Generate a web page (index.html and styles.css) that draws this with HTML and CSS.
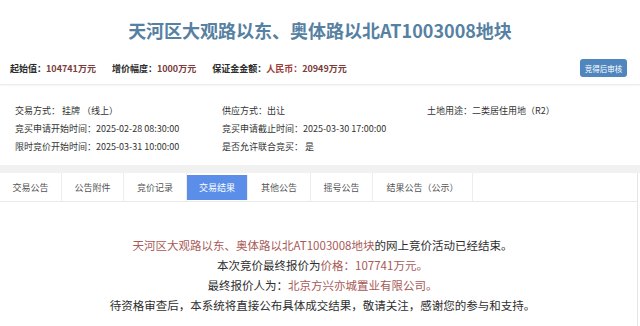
FILE: index.html
```html
<!DOCTYPE html>
<html lang="zh-CN">
<head>
    <meta charset="UTF-8">
    <meta name="viewport" content="width=device-width, initial-scale=1.0">
    <title>交易结果</title>
    <link rel="stylesheet" href="styles.css">
</head>
<body>
    <h1 class="title">天河区大观路以东、奥体路以北AT1003008地块</h1>

    <div class="summary">
        <span class="item"><b>起始值：</b><em>104741万元</em></span>
        <span class="item"><b>增价幅度：</b><em>1000万元</em></span>
        <span class="item"><b>保证金金额：</b><em class="rmb">人民币：</em><em>20949万元</em></span>
        <button class="audit">竞得后审核</button>
    </div>

    <!-- 基本信息 -->
    <div class="info">
        <div>交易方式：&nbsp;挂牌 （线上）</div>
        <div>供应方式：出让</div>
        <div>土地用途：二类居住用地（R2）</div>
        <div>竞买申请开始时间：2025-02-28 08:30:00</div>
        <div>竞买申请截止时间：2025-03-30 17:00:00</div>
        <div></div>
        <div>限时竞价开始时间：2025-03-31 10:00:00</div>
        <div>是否允许联合竞买：&nbsp;是</div>
        <div></div>
    </div>

    <div class="band"></div>

    <div class="panel">
        <div class="tabs">
            <div class="tab">交易公告</div>
            <div class="tab">公告附件</div>
            <div class="tab w63">竞价记录</div>
            <div class="tab active">交易结果</div>
            <div class="tab w63">其他公告</div>
            <div class="tab">摇号公告</div>
            <div class="tab wide">结果公告（公示）</div>
        </div>

        <!-- 交易结果 -->
        <div class="result">
            <p><span class="hl">天河区大观路以东、奥体路以北AT1003008地块</span>的网上竞价活动已经结束。</p>
            <p>本次竞价最终报价为<span class="hl">价格：107741万元。</span></p>
            <p>最终报价人为：<span class="hl">北京方兴亦城置业有限公司。</span></p>
            <p>待资格审查后，本系统将直接公布具体成交结果，敬请关注，感谢您的参与和支持。</p>
        </div>
    </div>

    <div class="band bottom"></div>
</body>
</html>
```

FILE: styles.css
```css
* {
    margin: 0;
    padding: 0;
    box-sizing: border-box;
}

body {
    background: #fff;
    font-family: "Noto Sans CJK SC", "Microsoft YaHei", sans-serif;
    color: #333;
    overflow: hidden;
}

.title {
    padding: 19px 0 11px;
    line-height: 22px;
    font-size: 18px;
    font-weight: 700;
    color: #5681a2;
    text-align: center;
}

.summary {
    display: flex;
    align-items: center;
    height: 33px;
    padding: 0 13px 0 10px;
    border-bottom: 1px solid #ececec;
    box-shadow: 0 1px 2px rgba(0, 0, 0, 0.04);
    font-size: 9px;
}

.summary .item {
    margin-right: 16px;
}

.summary b {
    color: #2b2b2b;
}

.summary em {
    font-style: normal;
    font-weight: 700;
    color: #7b3c3a;
}

.summary em.rmb {
    color: #9d3b38;
}

.audit {
    margin-left: auto;
    width: 47px;
    height: 18px;
    border: none;
    border-radius: 3px;
    background: #4f86bd;
    color: #fff;
    font-family: inherit;
    font-size: 7.5px;
}

.info {
    display: grid;
    grid-template-columns: 207px 205px 1fr;
    padding: 17px 0 9px 15px;
    font-size: 9px;
    line-height: 18px;
    color: #333;
}

.band {
    height: 8px;
    background: #f1f1f1;
}

.panel {
    margin-right: 2px;
    border-right: 1px solid #e6e6e6;
}

.tabs {
    display: flex;
    height: 29px;
    border-bottom: 1px solid #e9e9e9;
}

.tab {
    display: flex;
    align-items: center;
    justify-content: center;
    width: 62px;
    border-right: 1px solid #ededed;
    font-size: 9px;
    color: #555;
}

.tab.w63 {
    width: 63px;
}

.tab.wide {
    width: 100px;
}

.tab.active {
    width: 61px;
    margin: 2px 0 1px;
    background: #5b8ee8;
    color: #fff;
}

.result {
    padding: 33px 0 16px 8px;
    text-align: center;
    font-size: 11.5px;
    line-height: 20px;
    color: #2e2e2e;
}

.result .hl {
    color: #a85a57;
}

.band.bottom {
    height: 10px;
}
```
